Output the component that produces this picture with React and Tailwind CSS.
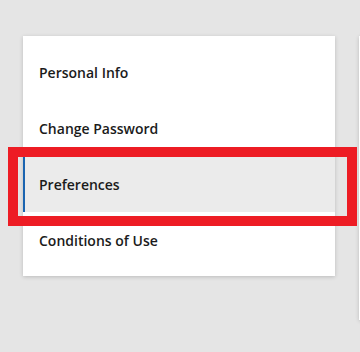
import React from "react";

const items = ["Personal Info", "Change Password", "Preferences", "Conditions of Use"];

export default function App() {
  return (
    <div
      className="relative w-[360px] h-[352px] overflow-hidden bg-[#e5e5e5]"
      style={{ fontFamily: '"Open Sans", "Noto Sans", sans-serif' }}
    >
      <div className="flex items-start gap-[24px] pl-[23px] pt-[36px]">
        <nav className="w-[312px] shrink-0 bg-white py-[8px] shadow-[0_1px_4px_rgba(0,0,0,0.18)]">
          {items.map((t) => {
            const active = t === "Preferences";
            return (
              <div
                key={t}
                className={
                  active
                    ? "flex h-[56px] items-center border-l-[2px] border-[#1a64b0] bg-[#ebebeb] pl-[14px] text-[14px] font-semibold text-[#1b1b1b]"
                    : "flex h-[56px] items-center pl-[16px] text-[14px] font-semibold text-[#1b1b1b]"
                }
              >
                {t}
              </div>
            );
          })}
        </nav>
        <div className="h-[284px] w-[200px] shrink-0 bg-white shadow-[0_1px_4px_rgba(0,0,0,0.18)]" />
      </div>
      <div className="pointer-events-none absolute left-[8px] top-[147px] h-[79px] w-[349px] border-[10px] border-[#ed1c24]" />
    </div>
  );
}
